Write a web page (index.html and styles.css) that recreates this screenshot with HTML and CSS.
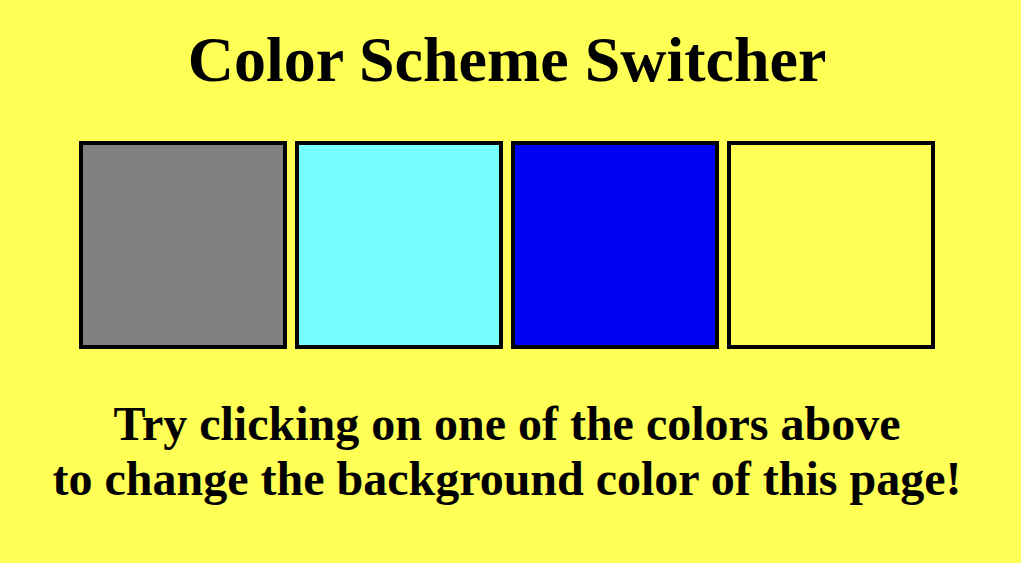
FILE: index.html
```html
<!DOCTYPE html>
<html>
<head>
<meta charset="utf-8">
<link rel="stylesheet" href="styles.css">
</head>
<body>
<main class="page">
  <h1 class="title">Color Scheme Switcher</h1>
  <div class="swatches">
    <div class="swatch gray"></div>
    <div class="swatch cyan"></div>
    <div class="swatch blue"></div>
    <div class="swatch yellow"></div>
  </div>
  <p class="hint">Try clicking on one of the colors above<br>to change the background color of this page!</p>
</main>
</body>
</html>
```
FILE: styles.css
```css
html, body {
  margin: 0;
  padding: 0;
  background: #ffff55;
}
.page {
  width: 1014px;
  display: flex;
  flex-direction: column;
  align-items: center;
  font-family: "Liberation Serif", "Times New Roman", serif;
  font-weight: bold;
  color: #000;
}
.title {
  margin: 23px 0 0;
  font-size: 64px;
  line-height: 74px;
}
.swatches {
  display: flex;
  gap: 8px;
  margin-top: 44px;
}
.swatch {
  width: 200px;
  height: 200px;
  border: 4px solid #000;
}
.gray { background: #808080; }
.cyan { background: #77ffff; }
.blue { background: #0000f5; }
.yellow { background: #ffff55; }
.hint {
  margin: 47px 0 0;
  font-size: 48px;
  line-height: 55px;
  text-align: center;
}
```
